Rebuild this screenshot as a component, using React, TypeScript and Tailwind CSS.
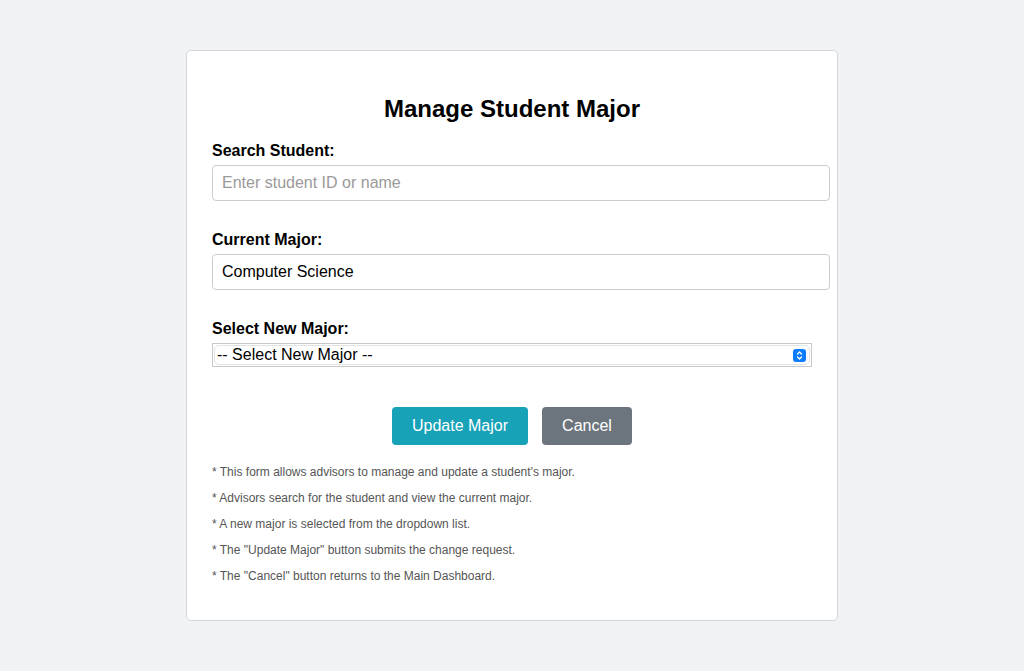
import React, { useState } from 'react';

const notes = [
  "* This form allows advisors to manage and update a student's major.",
  '* Advisors search for the student and view the current major.',
  '* A new major is selected from the dropdown list.',
  '* The "Update Major" button submits the change request.',
  '* The "Cancel" button returns to the Main Dashboard.',
];

const App: React.FC = () => {
  const [search, setSearch] = useState('');

  return (
    <div className="min-h-[671px] w-full bg-[#f1f2f4] pt-[50px] font-['Liberation_Sans',Arial,sans-serif]">
      <div className="mx-auto flex h-[571px] w-[652px] flex-col rounded-[5px] border border-[#d3d6db] bg-white pl-[25px] pt-[44px]">
        <h1 className="w-[600px] text-center text-[24px] font-bold leading-[28px] text-black">Manage Student Major</h1>

        <label className="mt-[18px] text-[16px] font-bold leading-[20px] text-black">Search Student:</label>
        <input
          value={search}
          onChange={(e) => setSearch(e.target.value)}
          placeholder="Enter student ID or name"
          className="mt-[4px] h-[36px] w-[618px] rounded-[4px] border border-[#cccccc] px-[9px] text-[16px] text-black outline-none placeholder:text-[#9a9a9a]"
        />

        <label className="mt-[29px] text-[16px] font-bold leading-[20px] text-black">Current Major:</label>
        <input
          readOnly
          value="Computer Science"
          className="mt-[4px] h-[36px] w-[618px] rounded-[4px] border border-[#cccccc] px-[9px] text-[16px] text-black outline-none"
        />

        <label className="mt-[29px] text-[16px] font-bold leading-[20px] text-black">Select New Major:</label>
        <div className="mt-[4px] flex h-[24px] w-[600px] items-center border border-[#c8c8c8] p-[1px]">
          <div className="flex h-full w-full items-center justify-between rounded-[5px] border border-[#e4e4e4] pl-[2px] pr-[3px]">
            <span className="text-[16px] leading-[18px] text-black">-- Select New Major --</span>
            <span className="flex h-[13px] w-[13px] items-center justify-center rounded-[3px] bg-[#0b7bff]">
              <svg width="9" height="11" viewBox="0 0 9 11" fill="none" stroke="white" strokeWidth="1.4" strokeLinecap="round" strokeLinejoin="round">
                <path d="M2.5 4 L4.5 2 L6.5 4" />
                <path d="M2.5 7 L4.5 9 L6.5 7" />
              </svg>
            </span>
          </div>
        </div>

        <div className="mt-[40px] flex w-[600px] justify-center gap-[14px]">
          <button className="h-[38px] w-[136px] rounded-[4px] bg-[#17a2b8] text-[16px] text-white">Update Major</button>
          <button className="h-[38px] w-[90px] rounded-[4px] bg-[#6c757d] text-[16px] text-white">Cancel</button>
        </div>

        <div className="mt-[14px] flex flex-col">
          {notes.map((n) => (
            <p key={n} className="text-[12px] leading-[26px] text-[#555555]">{n}</p>
          ))}
        </div>
      </div>
    </div>
  );
};

export default App;
